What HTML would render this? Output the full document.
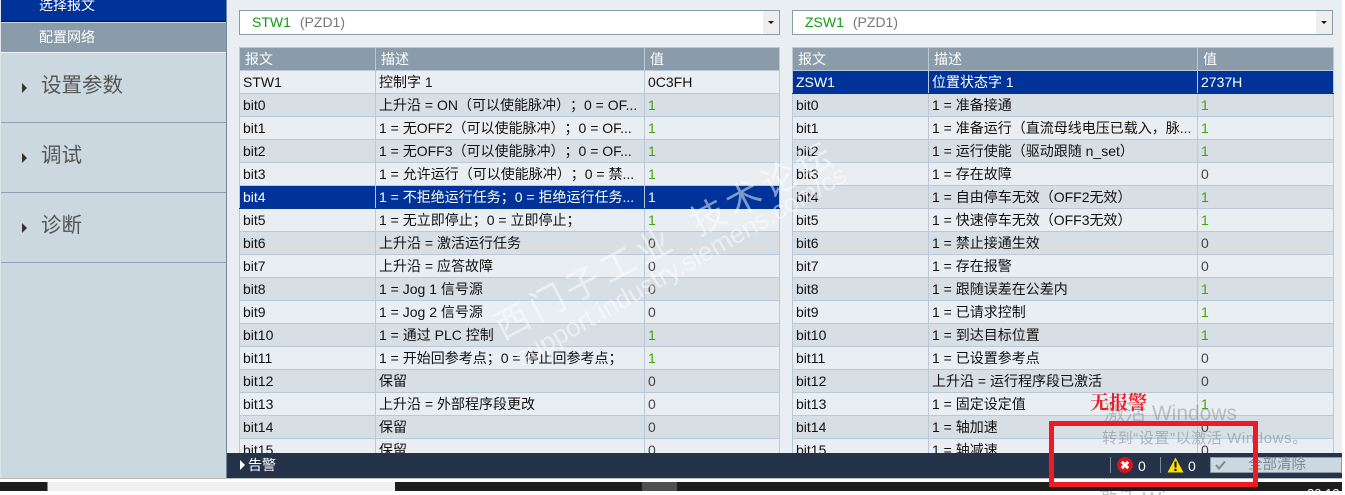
<!DOCTYPE html>
<html lang="zh"><head><meta charset="utf-8"><title>报文</title>
<style>
html,body{margin:0;padding:0;width:1345px;height:495px;overflow:hidden;background:#fff}
body{position:relative;font-family:"Liberation Sans","WenQuanYi Zen Hei","Noto Sans CJK SC",sans-serif;font-size:14px;color:#111;text-spacing-trim:space-all;font-feature-settings:"chws" 0}
div{position:absolute;box-sizing:border-box;white-space:nowrap}
table{position:absolute;top:47px;border-collapse:collapse;table-layout:fixed;font-size:14px}
td,th{height:23px;padding:0 0 0 3px;box-sizing:border-box;border:1px solid #b9c9d8;overflow:hidden;white-space:nowrap;font-weight:normal;text-align:left;line-height:21px}
th{background:#8a9ba9;color:#fff;padding-left:5px;font-size:14px}
tr.o td{background:#e9eef3}
tr.e td{background:#d7dfe5}
tr.s td{background:#003399;color:#fff;border-top-color:#003399;border-bottom-color:#003399}
td.g{color:#3fa600;font-weight:normal}
td.z{color:#444}
.nav{left:1px;width:225px;height:70px;border-bottom:1px solid #8fa1b1;font-size:20.5px;color:#555;padding:21px 0 0 40px;line-height:24px}
.nav i{position:absolute;left:21px;top:30px;border-left:5px solid #333;border-top:5px solid transparent;border-bottom:5px solid transparent}
.dd{top:10px;height:25px;background:#fff;border:1px solid #8a9ba9;padding-left:12px;line-height:23px;font-size:14px;color:#777}
.dd b{font-weight:normal;color:#159a15;margin-right:9px}
.dd u{position:absolute;right:0;top:0;width:16px;height:23px;background:#eee}
.dd u:after{content:"";position:absolute;left:5px;top:10px;border-top:3px solid #111;border-left:3px solid transparent;border-right:3px solid transparent}
</style></head><body>
<div style="left:0;top:0;width:1342px;height:478px;background:#e9eef3"></div>
<div style="left:0;top:0;width:1px;height:478px;background:#dfe6ea"></div>
<div style="left:1px;top:0;width:225px;height:478px;background:#cbd8e0"></div>
<div style="left:226px;top:0;width:1px;height:478px;background:#6f869b"></div>
<div style="left:1px;top:0;width:225px;height:22px;background:#003399;border-bottom:1px solid #111;color:#fff;padding-left:38px;line-height:11px">选择报文</div>
<div style="left:1px;top:23px;width:225px;height:30px;background:#8a9ba9;border-bottom:1px solid #eef2f5;color:#fff;padding-left:38px;line-height:28px">配置网络</div>
<div class="nav" style="top:53px"><i></i>设置参数</div>
<div class="nav" style="top:123px"><i></i>调试</div>
<div class="nav" style="top:193px"><i></i>诊断</div>

<div class="dd" style="left:239px;width:541px"><b>STW1</b>(PZD1)<u></u></div>
<div class="dd" style="left:792px;width:541px"><b>ZSW1</b>(PZD1)<u></u></div>

<table style="left:239px;width:540px"><colgroup><col style="width:136px"><col style="width:269px"><col style="width:135px"></colgroup>
<tr><th>报文</th><th>描述</th><th>值</th></tr>
<tr class="o"><td>STW1</td><td>控制字 1</td><td>0C3FH</td></tr>
<tr class="e"><td>bit0</td><td>上升沿 = ON（可以使能脉冲）；0 = OF...</td><td class="g">1</td></tr>
<tr class="o"><td>bit1</td><td>1 = 无OFF2（可以使能脉冲）；0 = OF...</td><td class="g">1</td></tr>
<tr class="e"><td>bit2</td><td>1 = 无OFF3（可以使能脉冲）；0 = OF...</td><td class="g">1</td></tr>
<tr class="o"><td>bit3</td><td>1 = 允许运行（可以使能脉冲）；0 = 禁...</td><td class="g">1</td></tr>
<tr class="s"><td>bit4</td><td>1 = 不拒绝运行任务；0 = 拒绝运行任务...</td><td>1</td></tr>
<tr class="o"><td>bit5</td><td>1 = 无立即停止；0 = 立即停止；</td><td class="g">1</td></tr>
<tr class="e"><td>bit6</td><td>上升沿 = 激活运行任务</td><td class="z">0</td></tr>
<tr class="o"><td>bit7</td><td>上升沿 = 应答故障</td><td class="z">0</td></tr>
<tr class="e"><td>bit8</td><td>1 = Jog 1 信号源</td><td class="z">0</td></tr>
<tr class="o"><td>bit9</td><td>1 = Jog 2 信号源</td><td class="z">0</td></tr>
<tr class="e"><td>bit10</td><td>1 = 通过 PLC 控制</td><td class="g">1</td></tr>
<tr class="o"><td>bit11</td><td>1 = 开始回参考点；0 = 停止回参考点；</td><td class="g">1</td></tr>
<tr class="e"><td>bit12</td><td>保留</td><td class="z">0</td></tr>
<tr class="o"><td>bit13</td><td>上升沿 = 外部程序段更改</td><td class="z">0</td></tr>
<tr class="e"><td>bit14</td><td>保留</td><td class="z">0</td></tr>
<tr class="o"><td>bit15</td><td>保留</td><td class="z">0</td></tr>
</table>

<table style="left:792px;width:541px"><colgroup><col style="width:136px"><col style="width:269px"><col style="width:136px"></colgroup>
<tr><th>报文</th><th>描述</th><th>值</th></tr>
<tr class="s"><td>ZSW1</td><td>位置状态字 1</td><td>2737H</td></tr>
<tr class="e"><td>bit0</td><td>1 = 准备接通</td><td class="g">1</td></tr>
<tr class="o"><td>bit1</td><td>1 = 准备运行（直流母线电压已载入，脉...</td><td class="g">1</td></tr>
<tr class="e"><td>bit2</td><td>1 = 运行使能（驱动跟随 n_set）</td><td class="g">1</td></tr>
<tr class="o"><td>bit3</td><td>1 = 存在故障</td><td class="z">0</td></tr>
<tr class="e"><td>bit4</td><td>1 = 自由停车无效（OFF2无效）</td><td class="g">1</td></tr>
<tr class="o"><td>bit5</td><td>1 = 快速停车无效（OFF3无效）</td><td class="g">1</td></tr>
<tr class="e"><td>bit6</td><td>1 = 禁止接通生效</td><td class="z">0</td></tr>
<tr class="o"><td>bit7</td><td>1 = 存在报警</td><td class="z">0</td></tr>
<tr class="e"><td>bit8</td><td>1 = 跟随误差在公差内</td><td class="g">1</td></tr>
<tr class="o"><td>bit9</td><td>1 = 已请求控制</td><td class="g">1</td></tr>
<tr class="e"><td>bit10</td><td>1 = 到达目标位置</td><td class="g">1</td></tr>
<tr class="o"><td>bit11</td><td>1 = 已设置参考点</td><td class="z">0</td></tr>
<tr class="e"><td>bit12</td><td>上升沿 = 运行程序段已激活</td><td class="z">0</td></tr>
<tr class="o"><td>bit13</td><td>1 = 固定设定值</td><td class="g">1</td></tr>
<tr class="e"><td>bit14</td><td>1 = 轴加速</td><td class="z">0</td></tr>
<tr class="o"><td>bit15</td><td>1 = 轴减速</td><td class="z">0</td></tr>
</table>

<div style="left:496px;top:308px;font-size:35px;line-height:40px;color:rgba(255,255,255,.5);transform:rotate(-28deg);transform-origin:0 50%;font-family:'Noto Sans CJK SC',sans-serif;letter-spacing:5px">西门子工业<span style="margin-left:22px">技术论坛</span></div>
<div style="left:517px;top:345px;font-size:26px;line-height:28px;color:rgba(255,255,255,.5);transform:rotate(-29.7deg);transform-origin:0 50%">support.industry.siemens.com/cs</div>

<div style="left:227px;top:453px;width:1115px;height:25px;background:#243349"></div>
<div style="left:240px;top:460px;border-left:5px solid #fff;border-top:5px solid transparent;border-bottom:5px solid transparent"></div>
<div style="left:248px;top:455px;color:#fff;line-height:20px">告警</div>
<div style="left:1110px;top:457px;width:1px;height:16px;background:#7f8c9b"></div>
<div style="left:1160px;top:457px;width:1px;height:16px;background:#7f8c9b"></div>
<svg style="position:absolute;left:1117px;top:457px" width="16" height="16" viewBox="0 0 16 16"><circle cx="8" cy="8" r="8" fill="#d8141c"/><path d="M4.8 4.8L11.2 11.2M11.2 4.8L4.8 11.2" stroke="#fff" stroke-width="3"/></svg>
<div style="left:1138px;top:457px;color:#fff;line-height:19px;font-size:14px">0</div>
<svg style="position:absolute;left:1167px;top:457px" width="17" height="16" viewBox="0 0 17 16"><path d="M8.5 0.5L16.5 15.5H0.5Z" fill="#f7e000"/><path d="M8.5 4.5V10.5M8.5 11.8V14" stroke="#111" stroke-width="2"/></svg>
<div style="left:1188px;top:457px;color:#fff;line-height:19px;font-size:14px">0</div>
<div style="left:1210px;top:457px;width:132px;height:16px;background:#cbd8e0;border:1px solid #8a9ba9;color:#7d8a96;padding-left:37px;line-height:14px;font-size:14.5px">全部清除</div>
<svg style="position:absolute;left:1214px;top:459px" width="13" height="12" viewBox="0 0 13 12"><path d="M2 6L5 9.5L11 2.5" fill="none" stroke="#7d8a96" stroke-width="2"/></svg>

<div style="left:0;top:478px;width:1342px;height:3px;background:#fff;border-top:1px solid #bbb"></div>
<div style="left:0;top:482px;width:47px;height:9px;background:#1e1e1e"></div>
<div style="left:47px;top:482px;width:348px;height:9px;background:#f1f1f1;border-left:1px solid #888"></div>
<div style="left:395px;top:482px;width:947px;height:9px;background:#1e1e1e"></div>
<div style="left:642px;top:482px;width:35px;height:9px;background:#505050"></div>
<div style="left:1307px;top:484px;height:7px;width:35px;overflow:hidden;color:#fff;font-size:13px;line-height:19px">20:12</div>

<div style="left:1104px;top:402px;font-size:21px;line-height:24px;color:rgba(120,125,130,.42)">激活 Windows</div>
<div style="left:1102px;top:430px;font-size:15px;letter-spacing:.6px;line-height:18px;color:rgba(120,125,130,.5)">转到“设置”以激活 Windows。</div>
<div style="left:1097px;top:491px;height:4px;width:75px;overflow:hidden;font-size:20px;line-height:18px;color:#c4c4c4">激活 Win</div>
<div style="left:1090px;top:391px;font-family:'Noto Serif CJK SC',serif;font-weight:bold;font-size:19px;line-height:22px;color:#ee1c25">无报警</div>
<div style="left:1049px;top:421px;width:209px;height:66px;border:5px solid #ed1c24"></div>
</body></html>
